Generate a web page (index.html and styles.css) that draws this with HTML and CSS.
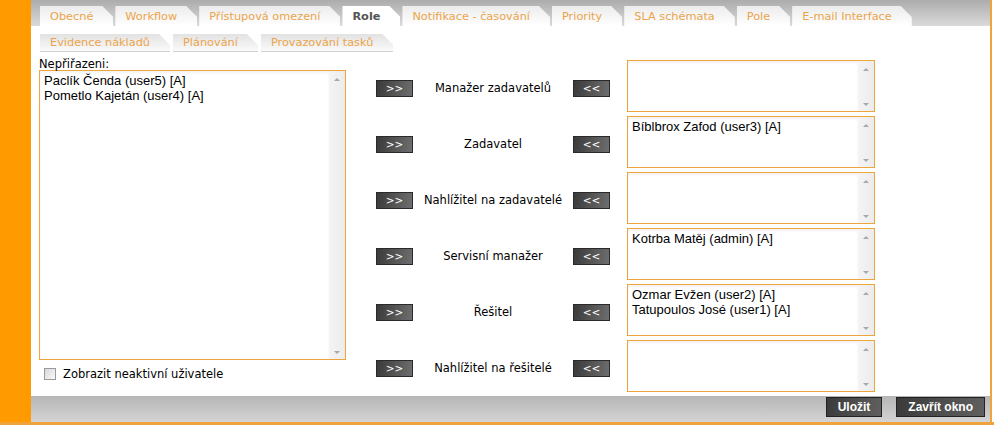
FILE: index.html
```html
<!DOCTYPE html>
<html lang="cs">
<head>
    <meta charset="UTF-8">
    <title>Role</title>
    <link rel="stylesheet" href="styles.css">
</head>
<body>
    <div class="window">
        <div class="side"></div>
        <div class="main">
            <div class="tabs tabs-top">
                <a class="tab">Obecné</a>
                <a class="tab">Workflow</a>
                <a class="tab">Přístupová omezení</a>
                <a class="tab active">Role</a>
                <a class="tab">Notifikace - časování</a>
                <a class="tab">Priority</a>
                <a class="tab">SLA schémata</a>
                <a class="tab">Pole</a>
                <a class="tab">E-mail Interface</a>
            </div>
            <div class="tabs tabs-sub">
                <a class="tab">Evidence nákladů</a>
                <a class="tab">Plánování</a>
                <a class="tab">Provazování tasků</a>
            </div>

            <div class="content">
                <div class="pool">
                    <div class="caption">Nepřiřazeni:</div>
                    <div class="listbox listbox-big">
                        <div class="items">
                            <div>Paclík Čenda (user5) [A]</div>
                            <div>Pometlo Kajetán (user4) [A]</div>
                        </div>
                        <div class="scroll"><span class="up"></span><span class="down"></span></div>
                    </div>
                    <label class="check"><span class="box"></span>Zobrazit neaktivní uživatele</label>
                </div>

                <div class="roles">
                    <div class="role">
                        <button class="move">&gt;&gt;</button>
                        <span class="role-name">Manažer zadavatelů</span>
                        <button class="move">&lt;&lt;</button>
                        <div class="listbox">
                            <div class="items"></div>
                            <div class="scroll"><span class="up"></span><span class="down"></span></div>
                        </div>
                    </div>
                    <div class="role">
                        <button class="move">&gt;&gt;</button>
                        <span class="role-name">Zadavatel</span>
                        <button class="move">&lt;&lt;</button>
                        <div class="listbox">
                            <div class="items"><div>Bíblbrox Zafod (user3) [A]</div></div>
                            <div class="scroll"><span class="up"></span><span class="down"></span></div>
                        </div>
                    </div>
                    <div class="role">
                        <button class="move">&gt;&gt;</button>
                        <span class="role-name">Nahlížitel na zadavatelé</span>
                        <button class="move">&lt;&lt;</button>
                        <div class="listbox">
                            <div class="items"></div>
                            <div class="scroll"><span class="up"></span><span class="down"></span></div>
                        </div>
                    </div>
                    <div class="role">
                        <button class="move">&gt;&gt;</button>
                        <span class="role-name">Servisní manažer</span>
                        <button class="move">&lt;&lt;</button>
                        <div class="listbox">
                            <div class="items"><div>Kotrba Matěj (admin) [A]</div></div>
                            <div class="scroll"><span class="up"></span><span class="down"></span></div>
                        </div>
                    </div>
                    <div class="role">
                        <button class="move">&gt;&gt;</button>
                        <span class="role-name">Řešitel</span>
                        <button class="move">&lt;&lt;</button>
                        <div class="listbox">
                            <div class="items">
                                <div>Ozmar Evžen (user2) [A]</div>
                                <div>Tatupoulos José (user1) [A]</div>
                            </div>
                            <div class="scroll"><span class="up"></span><span class="down"></span></div>
                        </div>
                    </div>
                    <div class="role">
                        <button class="move">&gt;&gt;</button>
                        <span class="role-name">Nahlížitel na řešitelé</span>
                        <button class="move">&lt;&lt;</button>
                        <div class="listbox">
                            <div class="items"></div>
                            <div class="scroll"><span class="up"></span><span class="down"></span></div>
                        </div>
                    </div>
                </div>
            </div>

            <div class="footer">
                <button class="action">Uložit</button>
                <button class="action">Zavřít okno</button>
            </div>
        </div>
    </div>
</body>
</html>
```

FILE: styles.css
```css
html, body {
    margin: 0;
    padding: 0;
    background: #fff;
}
body {
    font-family: "DejaVu Sans", Verdana, sans-serif;
    font-size: 11.5px;
    color: #000;
}
.window {
    display: flex;
    width: 994px;
    height: 422px;
    border-bottom: 3px solid #eea43a;
}
.side {
    width: 31px;
    background: #ff9a00;
}
.main {
    flex: 1;
    display: flex;
    flex-direction: column;
    border-right: 2px solid #eea43a;
    margin-right: 2px;
}

/* tabs */
.tabs {
    display: flex;
    gap: 2px;
    padding-left: 9px;
}
.tabs-top {
    height: 26px;
    box-sizing: border-box;
    padding-top: 6px;
    background: linear-gradient(#acacac, #dadada);
}
.tabs-sub {
    margin-top: 8px;
    height: 18px;
    gap: 3px;
}
.tab {
    display: flex;
    align-items: center;
    padding: 0 20px 0 10px;
    color: #eba44a;
    background: linear-gradient(#ececec, #fff);
    clip-path: polygon(0 0, calc(100% - 11px) 0, 100% 11px, 100% 100%, 0 100%);
    cursor: pointer;
    white-space: nowrap;
}
.tabs-top .tab {
    height: 20px;
    font-size: 11.3px;
}
.tabs-top .tab.active {
    background: #fff;
    color: #555;
    font-weight: bold;
}
.tabs-sub .tab {
    height: 18px;
    box-sizing: border-box;
    font-size: 11.3px;
    background: linear-gradient(#e2e2e2, #fafafa);
    border-bottom: 1px solid #d2d2d2;
}

/* content */
.content {
    flex: 1;
    display: flex;
    padding-top: 6px;
}
.pool {
    margin-left: 8px;
    width: 307px;
}
.caption {
    height: 12px;
    line-height: 12px;
}
.listbox {
    display: flex;
    border: 1px solid #f0a53c;
    background: #fff;
    height: 52px;
    width: 248px;
    box-sizing: border-box;
    font-family: "Liberation Sans", Arial, sans-serif;
    font-size: 13px;
    line-height: 15px;
}
.listbox-big {
    width: 307px;
    height: 290px;
}
.items {
    flex: 1;
    padding: 2px 4px;
    box-shadow: inset 0 2px 3px rgba(0, 0, 0, 0.05);
}
.scroll {
    width: 16px;
    background: linear-gradient(90deg, #f4f4f4, #ececec);
    display: flex;
    flex-direction: column;
    justify-content: space-between;
    align-items: center;
    padding: 7px 0 5px;
}
.scroll .up, .scroll .down {
    width: 0;
    height: 0;
    border-left: 3px solid transparent;
    border-right: 3px solid transparent;
}
.scroll .up {
    border-bottom: 3px solid #a8a8a8;
}
.scroll .down {
    border-top: 3px solid #a8a8a8;
}
.check {
    display: flex;
    align-items: center;
    gap: 7px;
    margin: 7px 0 0 5px;
}
.box {
    width: 10px;
    height: 10px;
    border: 1px solid #9a9a9a;
    background: linear-gradient(135deg, #d8d8d8, #fafafa);
}

/* roles */
.roles {
    margin: 2px 0 0 30px;
    display: flex;
    flex-direction: column;
    gap: 4px;
}
.role {
    display: flex;
    align-items: center;
    height: 52px;
}
.role .listbox {
    margin-left: 17px;
}
.move {
    width: 37px;
    height: 17px;
    margin-top: 4px;
    padding: 0;
    border: 1px solid #2a2a2a;
    background: linear-gradient(100deg, #3a3a3a, #6e6e6e);
    color: #fff;
    font-family: "DejaVu Sans", Verdana, sans-serif;
    font-size: 10.5px;
    cursor: pointer;
}
.role-name {
    width: 160px;
    margin-top: 4px;
    text-align: center;
}

/* footer */
.footer {
    height: 26px;
    box-sizing: border-box;
    display: flex;
    justify-content: flex-end;
    gap: 14px;
    padding: 1px 5px 0 0;
    background: linear-gradient(#b6b6b6, #d4d4d4);
}
.action {
    height: 20px;
    padding: 0 11px;
    border: 1px solid #222;
    background: linear-gradient(100deg, #3a3a3a, #606060);
    color: #fff;
    font-family: "Liberation Sans", Arial, sans-serif;
    font-weight: bold;
    font-size: 12px;
    cursor: pointer;
}
```
